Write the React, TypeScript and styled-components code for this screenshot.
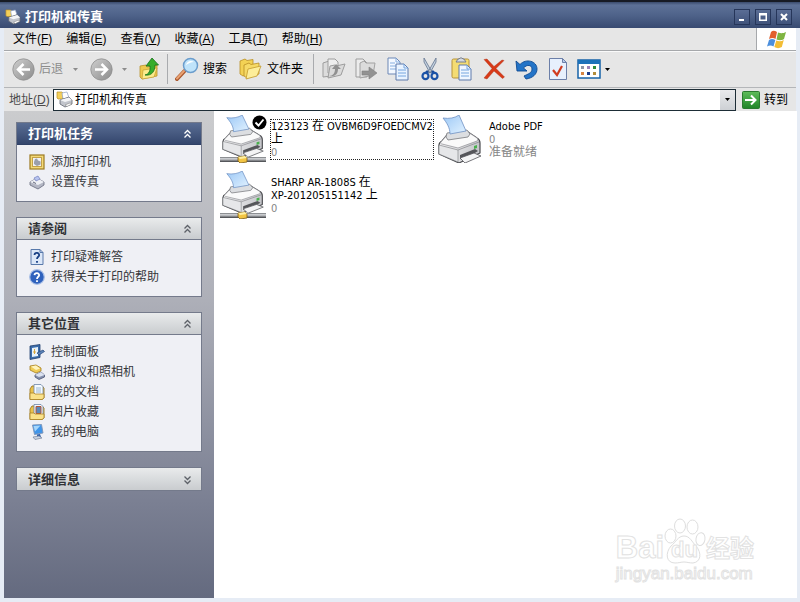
import React from 'react';
import styled, { createGlobalStyle, css } from 'styled-components';

const GlobalStyle = createGlobalStyle`
  * { box-sizing: border-box; }
  body {
    margin: 0;
    background: #e6ecf5;
    color: #000;
    font-family: "Liberation Sans", "Noto Sans CJK SC", sans-serif;
    font-size: 12px;
    line-height: 16px;
  }
  button, input { font: inherit; color: inherit; margin: 0; }
  svg { display: block; flex: none; }
`;

const Window = styled.div`
  min-height: 100vh;
  display: flex;
  flex-direction: column;
  padding-bottom: 4px;
`;

const TitleBar = styled.header`
  height: 28px;
  flex: none;
  display: flex;
  align-items: center;
  gap: 4px;
  padding: 4px 8px 0 5px;
  border-top: 2px solid #171b25;
  background: linear-gradient(#3a4b6d, #5d7197 12%, #4f638a 50%, #384a71);
`;

const Title = styled.h1`
  flex: 1;
  margin: 0;
  font-size: 13px;
  line-height: 16px;
  font-weight: 700;
  color: #fff;
`;

const CaptionButtons = styled.div`
  display: flex;
  gap: 5px;
`;

const CaptionButton = styled.button`
  width: 16px;
  height: 16px;
  padding: 0;
  display: grid;
  place-items: center;
  border: 1px solid #26365a;
  background: linear-gradient(#5a6d95, #40537b);
`;

const Chrome = styled.div`
  flex: 1;
  display: flex;
  flex-direction: column;
  margin: 0 4px;
  background: #e6e6e6;
`;

const MenuBar = styled.nav`
  height: 23px;
  flex: none;
  display: flex;
  align-items: stretch;
  border-bottom: 1px solid #a6a8ab;
`;

const MenuItems = styled.div`
  flex: 1;
  display: flex;
  align-items: center;
  gap: 14px;
  padding-left: 9px;
`;

const MenuItem = styled.button`
  padding: 0;
  border: 0;
  background: none;
  white-space: nowrap;
`;

const Brand = styled.div`
  width: 40px;
  display: grid;
  place-items: center;
  border-left: 1px solid #a6a8ab;
  background: #fff;
`;

const ToolBar = styled.div`
  height: 37px;
  flex: none;
  display: flex;
  align-items: center;
  padding: 0 0 1px 8px;
  border-top: 1px solid #fafafa;
  border-bottom: 1px solid #b4b6b9;
`;

const ToolButton = styled.button<{ $width: number; $start?: boolean }>`
  width: ${(p) => p.$width}px;
  height: 32px;
  flex: none;
  display: flex;
  align-items: center;
  justify-content: ${(p) => (p.$start ? 'flex-start' : 'center')};
  gap: 4px;
  padding: 0;
  border: 0;
  background: none;
  white-space: nowrap;
  &:disabled { color: #8c8c8c; }
`;

const Separator = styled.div`
  width: 1px;
  height: 30px;
  flex: none;
  margin: 0 7px 0 2px;
  background: #a9abae;
`;

const TightSeparator = styled(Separator)`
  margin: 0 4px 0 1px;
`;

const AddressBar = styled.form`
  height: 23px;
  flex: none;
  display: flex;
  align-items: center;
  padding: 0 8px 0 5px;
`;

const AddressLabel = styled.label`
  width: 44px;
  flex: none;
  color: #4a4a4a;
  white-space: nowrap;
`;

const AddressField = styled.div`
  flex: 1;
  height: 22px;
  display: flex;
  align-items: center;
  gap: 2px;
  padding-left: 2px;
  border: 1px solid #1d2d36;
  background: #fff;
`;

const AddressInput = styled.input`
  flex: 1;
  min-width: 0;
  padding: 0;
  border: 0;
  outline: 0;
  background: none;
`;

const AddressDrop = styled.button`
  width: 15px;
  height: 20px;
  padding: 0;
  display: grid;
  place-items: center;
  border: 0;
  background: linear-gradient(#e9eaec, #cdd0d4);
`;

const GoButton = styled.button`
  display: flex;
  align-items: center;
  gap: 4px;
  margin-left: 6px;
  padding: 0;
  border: 0;
  background: none;
`;

const Content = styled.div`
  flex: 1;
  display: flex;
  margin-right: -1px;
`;

const Sidebar = styled.aside`
  width: 210px;
  flex: none;
  display: flex;
  flex-direction: column;
  gap: 15px;
  padding: 11px 12px;
  background: linear-gradient(#cbccce, #adafb8 39%, #7b8093 80%, #646a7f);
`;

const Panel = styled.section`
  border: 1px solid #747a8b;
  background: #eff0f5;
`;

const PanelHeader = styled.h2<{ $primary?: boolean; $collapsed?: boolean }>`
  height: 22px;
  margin: 0;
  display: flex;
  align-items: center;
  justify-content: space-between;
  padding: 1px 9px 0 11px;
  font-size: 13px;
  line-height: 16px;
  color: #303236;
  background: linear-gradient(#e9ebec, #c9cccf);
  ${(p) => !p.$collapsed && css`border-bottom: 1px solid #747a8b;`}
  ${(p) =>
    p.$primary &&
    css`
      color: #fff;
      background: linear-gradient(#596d93, #34466d);
      border-bottom-color: #2f4066;
    `}
`;

const PanelToggle = styled.button`
  padding: 0;
  border: 0;
  background: none;
`;

const PanelList = styled.ul`
  margin: 0;
  padding: 7px 12px 9px;
  list-style: none;
`;

const PanelRow = styled.li`
  height: 20px;
`;

const TaskLink = styled.a`
  height: 20px;
  display: flex;
  align-items: center;
  gap: 6px;
  color: #35373b;
  text-decoration: none;
`;

const FileArea = styled.main`
  position: relative;
  flex: 1;
  padding: 0 5px;
  background: #fff;
`;

const PrinterGrid = styled.ul`
  margin: 0;
  padding: 0;
  list-style: none;
  display: grid;
  grid-template-columns: repeat(auto-fill, 218px);
  grid-auto-rows: 56px;
`;

const PrinterItem = styled.li`
  position: relative;
  display: flex;
  align-items: center;
  gap: 3px;
`;

const PrinterText = styled.div<{ $focused?: boolean }>`
  width: 164px;
  border: 1px dotted ${(p) => (p.$focused ? '#222' : 'transparent')};
  font-family: "DejaVu Sans Condensed", "DejaVu Sans", "Noto Sans CJK SC", sans-serif;
  font-size: 11px;
  line-height: 13px;
`;

const PrinterLine = styled.div<{ $muted?: boolean }>`
  height: 13px;
  white-space: nowrap;
  color: ${(p) => (p.$muted ? '#868686' : '#000')};
`;

const Han = styled.span`
  font-size: 12px;
`;

const DefaultBadge = styled.span`
  position: absolute;
  left: 33px;
  top: 4px;
`;

const Watermark = styled.div`
  position: absolute;
  right: 43px;
  bottom: 14px;
  color: #fff;
  -webkit-text-stroke: 1px #e2e2e2;
  font-family: "Liberation Sans", "Noto Sans CJK SC", sans-serif;
`;

const WatermarkLogo = styled.div`
  display: flex;
  align-items: flex-end;
  height: 46px;
  font-size: 31px;
  line-height: 32px;
  font-weight: 700;
`;

const WatermarkPaw = styled.div`
  position: relative;
  width: 42px;
  height: 46px;
`;

const WatermarkDu = styled.span`
  position: absolute;
  left: 7px;
  bottom: 2px;
  font-size: 22px;
  line-height: 24px;
`;

const WatermarkHan = styled.span`
  font-size: 24px;
  line-height: 30px;
`;

const WatermarkUrl = styled.div`
  font-size: 17px;
  line-height: 20px;
`;

/* ---------- icons ---------- */

const SmallPrinter = ({ size = 17 }: { size?: number }) => (
  <svg width={size} height={size} viewBox="0 0 17 17">
    <path d="M1 1h5l1 1v6H2L1 7z" fill="#f3cf5a" stroke="#b98f2a" strokeWidth=".7" />
    <path d="M6 2l5-1 2 6-6 1z" fill="#fff" stroke="#8fa2c4" strokeWidth=".7" />
    <path d="M4 9l9-3 3 3v4l-7 3-5-3z" fill="#c2c5cc" stroke="#5f646f" strokeWidth=".8" />
    <path d="M4 9l5 2 7-2-3-2.500z" fill="#f4f5f7" />
    <path d="M9 14l5-2 2 1-5 2.500z" fill="#fff" stroke="#777" strokeWidth=".5" />
  </svg>
);

const Chevron = ({ color, down }: { color: string; down?: boolean }) => (
  <svg width="9" height="10" viewBox="0 0 9 10">
    <path
      d={down ? 'M1.500 1.500l3 3 3-3M1.500 5.500l3 3 3-3' : 'M1.500 4.500l3-3 3 3M1.500 8.500l3-3 3 3'}
      fill="none"
      stroke={color}
      strokeWidth="1.300"
    />
  </svg>
);

const DropArrow = ({ color = '#000' }: { color?: string }) => (
  <svg width="5" height="3" viewBox="0 0 5 3">
    <path d="M0 0h5L2.500 3z" fill={color} />
  </svg>
);

const NavCircle = ({ back }: { back?: boolean }) => (
  <svg width="23" height="23" viewBox="0 0 23 23">
    <defs>
      <linearGradient id="nav" x1="0" y1="0" x2="1" y2="1">
        <stop offset="0" stopColor="#cfcfcf" />
        <stop offset="1" stopColor="#8b8b8b" />
      </linearGradient>
    </defs>
    <circle cx="11.500" cy="11.500" r="10.700" fill="url(#nav)" stroke="#8f8f8f" strokeWidth=".8" />
    <path
      d={back ? 'M18 11.500H7M11.500 6l-5.500 5.500 5.500 5.500' : 'M5 11.500h11M11.500 6l5.500 5.500-5.500 5.500'}
      fill="none"
      stroke="#fff"
      strokeWidth="2.500"
    />
  </svg>
);

const FolderUp = () => (
  <svg width="22" height="24" viewBox="0 0 22 24">
    <path d="M2 9l6-1 1 2 10-2v11L4 22 2 20z" fill="#eec94f" stroke="#b9922b" strokeWidth=".8" />
    <path d="M5 13l14-2-3 9-12 2z" fill="#fbeb8d" stroke="#c59d32" strokeWidth=".7" />
    <path d="M7 18c4-1 5.500-4 5-9H8l6-8 6.500 7H17c0 6-3 11-10 10z" fill="#36ad2b" stroke="#16701a" strokeWidth=".8" />
  </svg>
);

const SearchIcon = () => (
  <svg width="24" height="24" viewBox="0 0 24 24">
    <path d="M2 22l7.500-8" stroke="#a9562c" strokeWidth="4" strokeLinecap="round" />
    <path d="M2 21.500l7-7.500" stroke="#e9a273" strokeWidth="2" strokeLinecap="round" />
    <circle cx="15.500" cy="8.500" r="7" fill="#bfe3fa" stroke="#6b9dcc" strokeWidth="1.500" />
    <path d="M11 8c1-4 5-5 8-3-3 0-5 1-8 3z" fill="#fff" />
  </svg>
);

const FoldersIcon = () => (
  <svg width="24" height="22" viewBox="0 0 24 22">
    <path d="M1 3l5-2 2 1.500 6-1V15L4 18l-3-2z" fill="#f3d254" stroke="#b98e22" strokeWidth=".8" />
    <path d="M5 7l5-2 2 1.500 8-1.500v11L8 20l-3-2z" fill="#f6da66" stroke="#b98e22" strokeWidth=".8" />
    <path d="M9 11l13-3-4 10-11 3z" fill="#fdee9a" stroke="#c39a2c" strokeWidth=".8" />
  </svg>
);

const GrayTransfer = ({ copy }: { copy?: boolean }) => (
  <svg width="24" height="22" viewBox="0 0 24 22">
    {copy ? (
      <>
        <path d="M2 1h7l4 4v14H2z" fill="#ececec" stroke="#9d9d9d" />
        <path d="M6 5l4-2 2 2h9l-2 12-13 3z" fill="#dcdcdc" stroke="#a2a2a2" />
        <path d="M8 13h7V9l8 6-8 6v-4H8z" fill="#929292" stroke="#808080" strokeWidth=".6" />
      </>
    ) : (
      <>
        <path d="M1 5l6-2 2 2v13l-8 1z" fill="#dcdcdc" stroke="#9d9d9d" />
        <path d="M6 1h7l3 3v11H6z" fill="#eee" stroke="#9d9d9d" />
        <path d="M8 8l5-1 1 1 9-2-4 11-13 3z" fill="#dadada" stroke="#9d9d9d" />
        <path d="M7 18c4 0 6-3 6-7h-3l4-5 5 5h-3c0 5-3 8-9 7z" fill="#909090" />
      </>
    )}
  </svg>
);

const CopyIcon = () => (
  <svg width="22" height="24" viewBox="0 0 22 24">
    <path d="M1 1h8l4 4v12H1z" fill="#f3f8ff" stroke="#6d87b5" />
    <path d="M9 1v4h4M3 6h5M3 9h6M3 12h6" fill="none" stroke="#86aee0" />
    <path d="M9 7h8l4 4v12H9z" fill="#e9f3ff" stroke="#5f7aab" />
    <path d="M17 7v4h4M11 13h8M11 16h8M11 19h8" fill="none" stroke="#77a6df" />
  </svg>
);

const CutIcon = () => (
  <svg width="18" height="24" viewBox="0 0 18 24">
    <path d="M3 1l8 14-2 1L3 5zM15 1L7 15l2 1 6-11z" fill="#c4d0de" stroke="#62758f" strokeWidth=".8" />
    <path d="M7 14l-2 2M11 14l2 2" stroke="#1a4b9a" strokeWidth="2.500" />
    <ellipse cx="4.500" cy="19" rx="3" ry="3.200" fill="none" stroke="#1c53a7" strokeWidth="2.200" />
    <ellipse cx="13.500" cy="19" rx="3" ry="3.200" fill="none" stroke="#1c53a7" strokeWidth="2.200" />
  </svg>
);

const PasteIcon = () => (
  <svg width="22" height="24" viewBox="0 0 22 24">
    <rect x="1" y="2" width="17" height="19" rx="1.500" fill="#f4dc72" stroke="#b6923a" />
    <path d="M5 5l2-3h1l1-1h2l1 1h1l2 3z" fill="#d5d9df" stroke="#777f8d" />
    <path d="M8 8h8l4 4v11H8z" fill="#f0f6ff" stroke="#5f7aab" />
    <path d="M16 8v4h4M10 13h8M10 16h8M10 19h8" fill="none" stroke="#77a6df" />
  </svg>
);

const DeleteIcon = () => (
  <svg width="22" height="22" viewBox="0 0 22 22">
    <path d="M1 1.500l3-.5 7 7.500L19 2l2 .5-8 8 8.500 8.500-2 1.500L11 13 4 21l-3-1 8-9.500z" fill="#d83a18" stroke="#a82b10" strokeWidth=".4" />
  </svg>
);

const UndoIcon = () => (
  <svg width="23" height="21" viewBox="0 0 23 21">
    <path
      d="M1 2l1 10 10 0-3.500-3C12 5 17 6 17 10c0 4-4 5-8 7l2 3c7-1 11-5 11-10C22 2 11-1 5 5.500z"
      fill="#2474c7"
      stroke="#0f4a92"
      strokeWidth=".9"
      strokeLinejoin="round"
    />
  </svg>
);

const PropertiesIcon = () => (
  <svg width="20" height="24" viewBox="0 0 20 24">
    <path d="M1.500 1.500h13l4 4v17h-17z" fill="#e7f0fd" stroke="#6c7fa8" />
    <path d="M14.500 1.500v4h4z" fill="#b5caea" stroke="#6c7fa8" />
    <path d="M5 13l4 5 5-9" fill="none" stroke="#d03c20" strokeWidth="2.200" />
  </svg>
);

const swatches = ['#8d96a6', '#9b82b8', '#2f8d3c', '#d88642', '#1e3f8d', '#b28d3c'];

const ViewsIcon = () => (
  <svg width="24" height="20" viewBox="0 0 24 20">
    <rect x="1" y="1" width="22" height="18" fill="#fff" stroke="#1763a8" strokeWidth="1.500" />
    <path d="M1 1h22v4H1z" fill="#1d72ba" />
    {swatches.map((fill, i) => (
      <rect key={i} x={4 + (i % 3) * 6} y={i < 3 ? 7 : 13} width="3" height="3" fill={fill} />
    ))}
  </svg>
);

const FlagIcon = () => (
  <svg width="20" height="19" viewBox="0 0 20 19">
    <path d="M4 2c2-2 4-1 6 0L8.500 9c-2-1.500-4-1.500-6.500 0z" fill="#e2602c" />
    <path d="M11 2.500c3 1 5 1 8-.5l-2 7c-2 1.500-5 1.500-7.500.5z" fill="#7fb541" />
    <path d="M2 10c2-1.500 4-1.500 6.300 0L6.500 16.500c-2-1.500-4-1.500-6.500 0z" fill="#4c8fdd" />
    <path d="M9.300 10.500c2.500 1 5 1 7.500-.5l-2 7c-2.500 1.500-5 1.500-7.500 0z" fill="#f3bd35" />
  </svg>
);

const GoIcon = () => (
  <svg width="18" height="18" viewBox="0 0 18 18">
    <defs>
      <linearGradient id="go" x1="0" y1="0" x2="0" y2="1">
        <stop offset="0" stopColor="#5fbd5b" />
        <stop offset="1" stopColor="#1f8427" />
      </linearGradient>
    </defs>
    <rect x=".5" y=".5" width="17" height="17" rx="1" fill="url(#go)" stroke="#2a7a2f" />
    <path d="M3 9h10M9 4.500L13.500 9 9 13.500" fill="none" stroke="#fff" strokeWidth="2" />
  </svg>
);

const AddPrinterIcon = () => (
  <svg width="16" height="16" viewBox="0 0 16 16">
    <rect x="1" y="1" width="14" height="14" fill="#f3d978" stroke="#9c7a22" strokeWidth="1.200" />
    <rect x="3.500" y="3.500" width="9" height="9" fill="#f1f2f6" stroke="#c4a24a" />
    <path d="M5 8l1-3 2-.5 1 2 2.500 1v3L8 12l-3-2z" fill="#9a9fab" />
  </svg>
);

const FaxIcon = () => (
  <svg width="16" height="16" viewBox="0 0 16 16">
    <path d="M1 8l7-4 7 4v3l-6 4-8-4z" fill="#b4b7c4" stroke="#666a7c" strokeWidth=".8" />
    <path d="M1 8l7-4 7 4-6 3z" fill="#eef0f5" />
    <path d="M5 4l4-2 2 3-4 2z" fill="#b7c4f1" stroke="#7280bd" strokeWidth=".7" />
    <path d="M4 8l3 1.500" stroke="#65697a" />
  </svg>
);

const HelpPageIcon = () => (
  <svg width="16" height="16" viewBox="0 0 16 16">
    <path d="M2 .5h9l3 3v12H2z" fill="#dbe7f8" stroke="#5879ab" />
    <path d="M11 .5v3h3" fill="none" stroke="#5879ab" />
    <path d="M5.500 6c.3-3 5-2.500 4.600.3-.2 1.500-2.100 1.500-2.100 3.700M8 12v1.700" fill="none" stroke="#173f86" strokeWidth="1.800" />
  </svg>
);

const HelpIcon = () => (
  <svg width="16" height="16" viewBox="0 0 16 16">
    <circle cx="8" cy="8" r="7.300" fill="#2f62bd" stroke="#a9bfe6" strokeWidth="1.200" />
    <path d="M5.500 6.200c.3-3 5-2.500 4.600.2C9.900 7.800 8 7.900 8 10M8 11.300V13" fill="none" stroke="#fff" strokeWidth="1.800" />
  </svg>
);

const ControlPanelIcon = () => (
  <svg width="16" height="16" viewBox="0 0 16 16">
    <path d="M1 2l10-1.500v13L1 15.500z" fill="#3b6dab" stroke="#22406f" strokeWidth=".8" />
    <path d="M3 4l6-1v9l-6 1z" fill="#e6f2fc" />
    <path d="M5.500 5v5M4 8h3" stroke="#d8a73c" />
    <path d="M8 9l6-3 1.500 1.500L10 11z" fill="#5b84b8" stroke="#27487c" strokeWidth=".7" />
  </svg>
);

const ScannerIcon = () => (
  <svg width="16" height="16" viewBox="0 0 16 16">
    <path d="M1 2l6-1 5 3v3L7 9 1 6z" fill="#efcc58" stroke="#a67e20" strokeWidth=".8" />
    <path d="M2 2.500l5-1 4 3-4 1.500z" fill="#fff4bd" />
    <path d="M6 11l6-3 3.500 3v2L10 15.500 6 13z" fill="#8490ad" stroke="#4a5473" strokeWidth=".8" />
    <path d="M6 11l6-3 3.500 3L10 13z" fill="#dbe2f1" />
  </svg>
);

const DocumentsIcon = ({ picture }: { picture?: boolean }) => (
  <svg width="16" height="16" viewBox="0 0 16 16">
    <path d="M1 5l2-3h10l2 2v10l-2 1.500H1z" fill="#e9c14b" stroke="#a07a22" strokeWidth=".9" />
    <path d="M5 .5h7l2 2V11H5z" fill="#f5faff" stroke="#6d87a8" strokeWidth=".8" />
    {picture ? (
      <path d="M7 2.500h5v7H7z" fill="#5b88b8" stroke="#b0543a" />
    ) : (
      <path d="M7 4h5M7 6h5M7 8h5" stroke="#84a6c8" strokeWidth=".8" />
    )}
    <path d="M1 9h4l1 1h9v4l-2 1.500H1z" fill="#fae28a" stroke="#a98328" strokeWidth=".8" />
  </svg>
);

const ComputerIcon = () => (
  <svg width="16" height="16" viewBox="0 0 16 16">
    <path d="M3.500 1l9-.5L14 9l-8.500 1.500z" fill="#3f95ea" stroke="#7e93b4" strokeWidth=".9" />
    <path d="M4.500 2l7-.5-5.500 6z" fill="#a5d6fb" />
    <path d="M8 10.500l3-.5 1 3-4 .5z" fill="#2f62ad" />
    <path d="M4 13l6-1 3 2-7 1.500z" fill="#c9d3e3" stroke="#76839a" strokeWidth=".7" />
  </svg>
);

const PrinterIcon = ({ network }: { network?: boolean }) => (
  <svg width="48" height="48" viewBox="0 0 48 48">
    <defs>
      <linearGradient id="paper" x1="0" y1="0" x2="1" y2="1">
        <stop offset="0" stopColor="#9cc8f6" />
        <stop offset="1" stopColor="#e2f2ff" />
      </linearGradient>
      <linearGradient id="front" x1="0" y1="0" x2="1" y2="0">
        <stop offset="0" stopColor="#f4f4f5" />
        <stop offset="1" stopColor="#c4c5c9" />
      </linearGradient>
      <linearGradient id="pipe" x1="0" y1="0" x2="0" y2="1">
        <stop offset="0" stopColor="#6f7276" />
        <stop offset=".35" stopColor="#d8dadd" />
        <stop offset="1" stopColor="#3d3f43" />
      </linearGradient>
    </defs>
    <g transform={network ? 'translate(3 0) scale(.96 .88)' : 'translate(1 0)'} strokeLinejoin="round">
      <path d="M1 30c0-2 1-3 3-4l5-6 21-3 9 6c2 1 3 3 3 5v10L21 48 1 39z" fill="url(#front)" stroke="#4a4b4f" strokeWidth="1.200" />
      <path d="M3 27l6-7 21-3 9 6c1 1 1 2 0 3L20 33 4 29c-1 0-2-1-1-2z" fill="#fafafa" stroke="#8c8d92" strokeWidth=".7" />
      <path d="M1 30l19 5v12L1 39z" fill="#e6e7e9" stroke="#77787c" strokeWidth=".6" />
      <path d="M20 35l21-8" fill="none" stroke="#8c8d92" strokeWidth=".8" />
      <path d="M8 22l1-4 20-3 3 4-2 3-20 3z" fill="#dcdee1" stroke="#77787c" strokeWidth=".8" />
      <path d="M5 3c6 1 12 0 16-3l7 16-16 3C12 13 9 8 5 3z" fill="url(#paper)" stroke="#6f91c3" strokeWidth=".8" />
      <path d="M22 40l15-6 3 2-14 9-4-1z" fill="#55565a" />
      <path d="M22 43l14-5 7 3-16 7z" fill="#f4f4f5" stroke="#55565a" strokeWidth=".8" />
      <path d="M36 31l3-1v3l-3 1z" fill="#49b04d" />
    </g>
    {network && (
      <>
        <rect x="1" y="42" width="46" height="5" fill="url(#pipe)" />
        <path d="M19 42l7-1 2 2v4l-7 1-2-2z" fill="#f3c543" stroke="#7c5c17" strokeWidth=".8" />
        <path d="M19 42l7-1 2 2-7 1z" fill="#fff0a0" />
      </>
    )}
  </svg>
);

const CheckBadge = () => (
  <svg width="15" height="15" viewBox="0 0 15 15">
    <circle cx="7.500" cy="7.500" r="7" fill="#000" />
    <path d="M3.500 7.500l3 3 5-6" fill="none" stroke="#fff" strokeWidth="1.900" />
  </svg>
);

const Paw = () => (
  <svg width="42" height="46" viewBox="0 0 42 46" fill="#fff" stroke="#dedede">
    <ellipse cx="6.500" cy="18" rx="5.500" ry="7" />
    <ellipse cx="16" cy="8" rx="5.500" ry="7" />
    <ellipse cx="28.500" cy="9" rx="5.500" ry="7" />
    <ellipse cx="36.500" cy="21" rx="4.500" ry="6.500" transform="rotate(10 36 21)" />
    <path d="M20 18c6 0 8 6 12 10 6 7 5 16-3 17-4 0-6-1-9-1s-5 1-9 1C2 45 1 35 7 28c5-4 7-10 13-10z" />
  </svg>
);

/* ---------- data ---------- */

const menus = [
  ['文件', 'F'],
  ['编辑', 'E'],
  ['查看', 'V'],
  ['收藏', 'A'],
  ['工具', 'T'],
  ['帮助', 'H'],
];

const panels = [
  {
    title: '打印机任务',
    primary: true,
    items: [
      { text: '添加打印机', icon: <AddPrinterIcon /> },
      { text: '设置传真', icon: <FaxIcon /> },
    ],
  },
  {
    title: '请参阅',
    items: [
      { text: '打印疑难解答', icon: <HelpPageIcon /> },
      { text: '获得关于打印的帮助', icon: <HelpIcon /> },
    ],
  },
  {
    title: '其它位置',
    items: [
      { text: '控制面板', icon: <ControlPanelIcon /> },
      { text: '扫描仪和照相机', icon: <ScannerIcon /> },
      { text: '我的文档', icon: <DocumentsIcon /> },
      { text: '图片收藏', icon: <DocumentsIcon picture /> },
      { text: '我的电脑', icon: <ComputerIcon /> },
    ],
  },
  { title: '详细信息', items: [] },
];

const editTools = [
  { label: '移至', icon: <GrayTransfer />, disabled: true },
  { label: '复制到', icon: <GrayTransfer copy />, disabled: true },
  { label: '复制', icon: <CopyIcon /> },
  { label: '剪切', icon: <CutIcon /> },
  { label: '粘贴', icon: <PasteIcon /> },
  { label: '删除', icon: <DeleteIcon /> },
  { label: '撤销', icon: <UndoIcon /> },
  { label: '属性', icon: <PropertiesIcon /> },
];

export default function App() {
  return (
    <>
      <GlobalStyle />
      <Window>
        <TitleBar>
          <SmallPrinter size={16} />
          <Title>打印机和传真</Title>
          <CaptionButtons>
            <CaptionButton aria-label="最小化">
              <svg width="10" height="10" viewBox="0 0 10 10"><path d="M2 7h5v2H2z" fill="#fff" /></svg>
            </CaptionButton>
            <CaptionButton aria-label="最大化">
              <svg width="10" height="10" viewBox="0 0 10 10"><path d="M1 1h8v8H1zM2.500 3.500v4h5v-4z" fill="#fff" fillRule="evenodd" /></svg>
            </CaptionButton>
            <CaptionButton aria-label="关闭">
              <svg width="10" height="10" viewBox="0 0 10 10"><path d="M2 2l6 6M8 2L2 8" stroke="#fff" strokeWidth="2" /></svg>
            </CaptionButton>
          </CaptionButtons>
        </TitleBar>
        <Chrome>
          <MenuBar>
            <MenuItems>
              {menus.map(([text, key]) => (
                <MenuItem key={key}>{text}(<u>{key}</u>)</MenuItem>
              ))}
            </MenuItems>
            <Brand><FlagIcon /></Brand>
          </MenuBar>
          <ToolBar>
            <ToolButton $width={52} $start disabled><NavCircle back />后退</ToolButton>
            <ToolButton $width={22} disabled aria-label="后退列表"><DropArrow color="#8c8c8c" /></ToolButton>
            <ToolButton $width={30} disabled aria-label="前进"><NavCircle /></ToolButton>
            <ToolButton $width={16} disabled aria-label="前进列表"><DropArrow color="#8c8c8c" /></ToolButton>
            <ToolButton $width={33} aria-label="向上"><FolderUp /></ToolButton>
            <Separator />
            <ToolButton $width={64} $start><SearchIcon />搜索</ToolButton>
            <ToolButton $width={73} $start><FoldersIcon />文件夹</ToolButton>
            <TightSeparator />
            {editTools.map((t) => (
              <ToolButton key={t.label} $width={32} aria-label={t.label} disabled={t.disabled}>{t.icon}</ToolButton>
            ))}
            <ToolButton $width={38} aria-label="查看方式"><ViewsIcon /><DropArrow /></ToolButton>
          </ToolBar>
          <AddressBar onSubmit={(e) => e.preventDefault()}>
            <AddressLabel htmlFor="address">地址(<u>D</u>)</AddressLabel>
            <AddressField>
              <SmallPrinter />
              <AddressInput id="address" defaultValue="打印机和传真" />
              <AddressDrop type="button" aria-label="地址列表"><DropArrow /></AddressDrop>
            </AddressField>
            <GoButton type="submit"><GoIcon />转到</GoButton>
          </AddressBar>
          <Content>
            <Sidebar>
              {panels.map((p) => {
                const collapsed = p.items.length === 0;
                return (
                  <Panel key={p.title}>
                    <PanelHeader $primary={p.primary} $collapsed={collapsed}>
                      {p.title}
                      <PanelToggle aria-label={p.title}>
                        <Chevron color={p.primary ? '#fff' : '#5d6168'} down={collapsed} />
                      </PanelToggle>
                    </PanelHeader>
                    {!collapsed && (
                      <PanelList>
                        {p.items.map((it) => (
                          <PanelRow key={it.text}>
                            <TaskLink href="#">{it.icon}{it.text}</TaskLink>
                          </PanelRow>
                        ))}
                      </PanelList>
                    )}
                  </Panel>
                );
              })}
            </Sidebar>
            <FileArea>
              <PrinterGrid>
                <PrinterItem>
                  <PrinterIcon network />
                  <DefaultBadge><CheckBadge /></DefaultBadge>
                  <PrinterText $focused>
                    <PrinterLine>123123 <Han>在</Han> OVBM6D9FOEDCMV2</PrinterLine>
                    <PrinterLine><Han>上</Han></PrinterLine>
                    <PrinterLine $muted>0</PrinterLine>
                  </PrinterText>
                </PrinterItem>
                <PrinterItem>
                  <PrinterIcon />
                  <PrinterText>
                    <PrinterLine>Adobe PDF</PrinterLine>
                    <PrinterLine $muted>0</PrinterLine>
                    <PrinterLine $muted><Han>准备就绪</Han></PrinterLine>
                  </PrinterText>
                </PrinterItem>
                <PrinterItem>
                  <PrinterIcon network />
                  <PrinterText>
                    <PrinterLine>SHARP AR-1808S <Han>在</Han></PrinterLine>
                    <PrinterLine>XP-201205151142 <Han>上</Han></PrinterLine>
                    <PrinterLine $muted>0</PrinterLine>
                  </PrinterText>
                </PrinterItem>
              </PrinterGrid>
              <Watermark>
                <WatermarkLogo>
                  Bai
                  <WatermarkPaw>
                    <Paw />
                    <WatermarkDu>du</WatermarkDu>
                  </WatermarkPaw>
                  <WatermarkHan>经验</WatermarkHan>
                </WatermarkLogo>
                <WatermarkUrl>jingyan.baidu.com</WatermarkUrl>
              </Watermark>
            </FileArea>
          </Content>
        </Chrome>
      </Window>
    </>
  );
}
